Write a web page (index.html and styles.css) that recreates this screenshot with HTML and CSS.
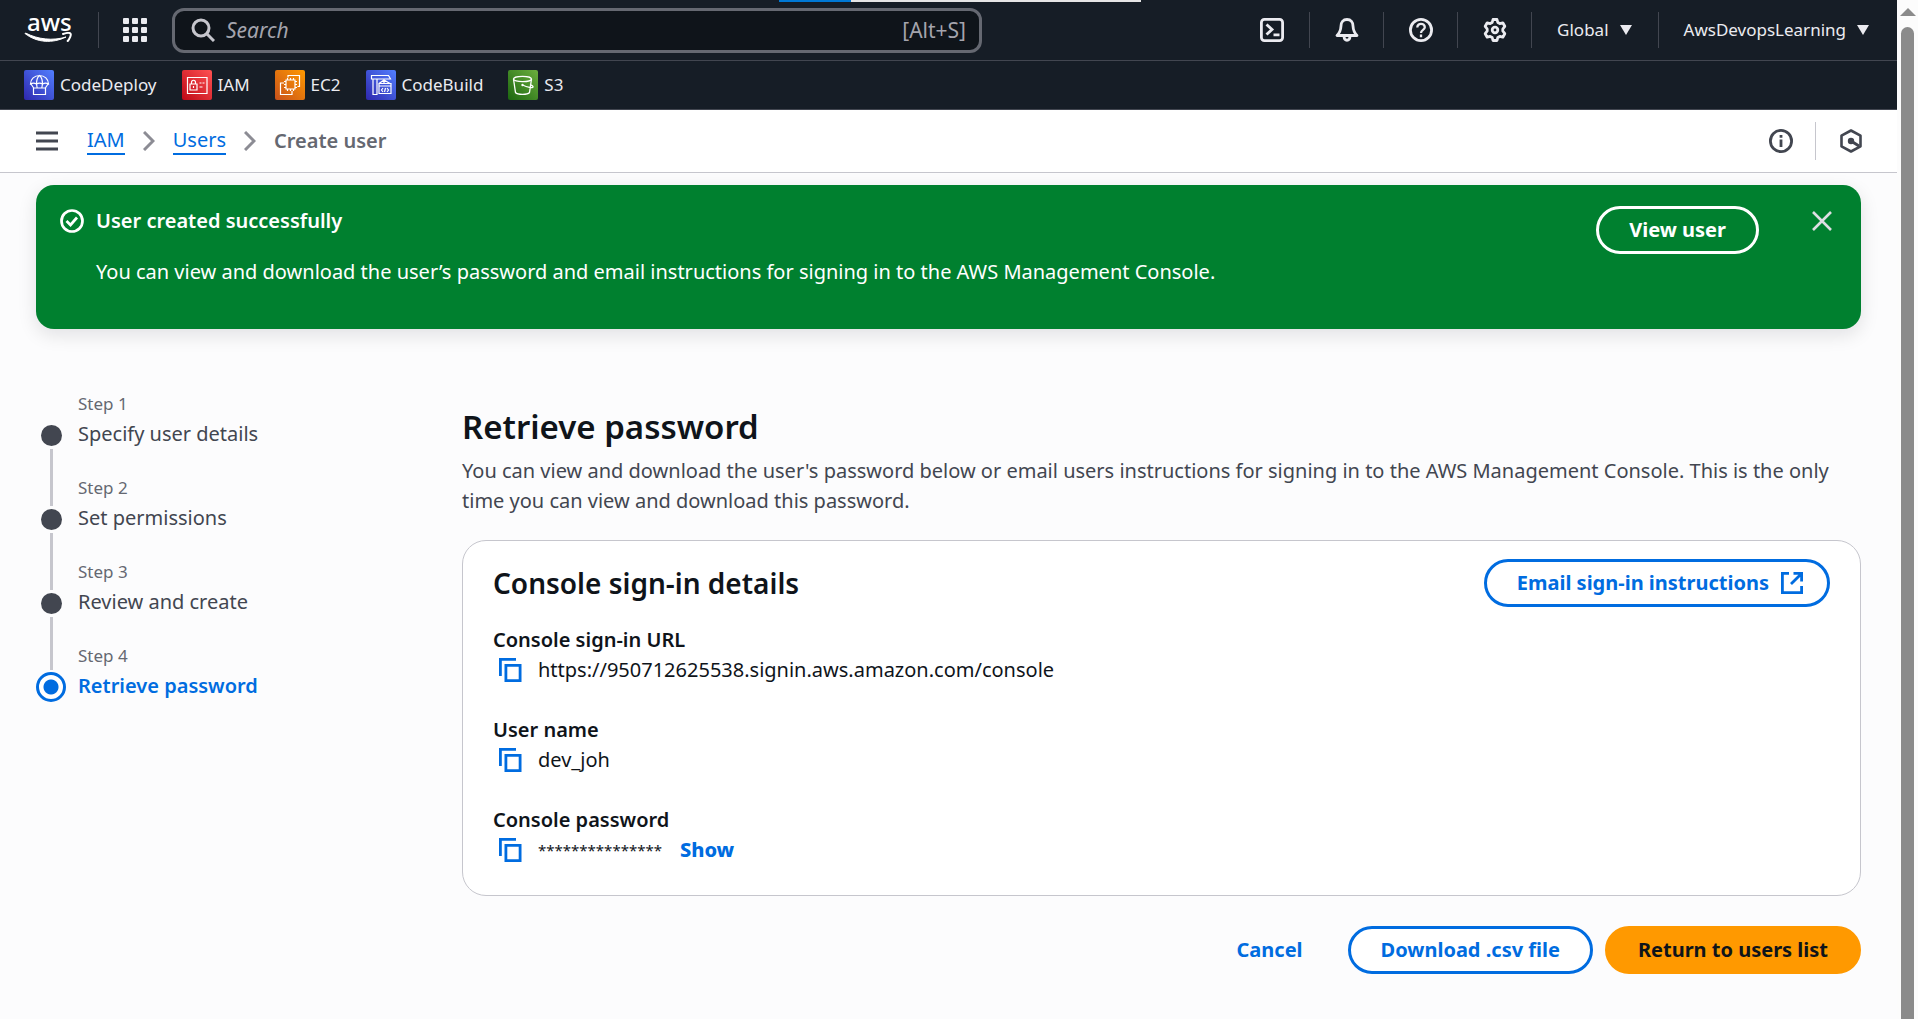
FILE: index.html
```html
<!DOCTYPE html>
<html lang="en">
<head>
<meta charset="utf-8">
<title>Create user | IAM</title>
<link rel="stylesheet" href="styles.css">
</head>
<body>
<div class="page">
  <header class="topnav">
    <a class="logo" href="#" aria-label="AWS home">
      <span class="logo-text">aws</span>
      <svg class="logo-smile" viewBox="0 0 48 13" aria-hidden="true"><path d="M1 1.500C13 11 29 11.500 42 5C29 9 14 7.500 1.500 1z" fill="#fff" stroke="#fff" stroke-linejoin="round"/><path d="M39 2c3-1 6.500-1.500 7.500-.4s-.8 5-2.800 7.400" fill="none" stroke="#fff" stroke-width="2" stroke-linecap="round"/></svg>
    </a>
    <button class="icon-btn apps" aria-label="Services"><svg viewBox="0 0 24 24" fill="#ebebf0"><rect width="6" height="6" rx="1"/><rect x="9" width="6" height="6" rx="1"/><rect x="18" width="6" height="6" rx="1"/><rect y="9" width="6" height="6" rx="1"/><rect x="9" y="9" width="6" height="6" rx="1"/><rect x="18" y="9" width="6" height="6" rx="1"/><rect y="18" width="6" height="6" rx="1"/><rect x="9" y="18" width="6" height="6" rx="1"/><rect x="18" y="18" width="6" height="6" rx="1"/></svg></button>
    <label class="search">
      <svg viewBox="0 0 24 24" fill="none" stroke="#c6c6cd" stroke-width="3"><circle cx="10" cy="10" r="8"/><path d="M16 16l7 7"/></svg>
      <input type="search" placeholder="Search" aria-label="Search">
      <span class="hint">[Alt+S]</span>
    </label>
    <nav class="utils" aria-label="Utilities">
      <button class="icon-btn" aria-label="CloudShell"><svg viewBox="0 0 24 24" fill="none" stroke="#ebebf0" stroke-width="2.800"><rect x="1.400" y="1.400" width="21.200" height="21.200" rx="3"/><path d="M6.500 6.500l5.500 5-5.500 5M13.500 16.800h6"/></svg></button>
      <button class="icon-btn" aria-label="Notifications"><svg viewBox="0 0 24 24" fill="none" stroke="#ebebf0" stroke-width="2.800" stroke-linejoin="round"><path d="M12 1.500c-4 0-6 3-6 6.500-.2 4-1.500 7-4 9.500h20c-2.500-2.500-3.800-5.500-4-9.500 0-3.500-2-6.500-6-6.500z"/><path d="M9 18.500c.3 5 5.700 5 6 0"/></svg></button>
      <button class="icon-btn" aria-label="Help"><svg viewBox="0 0 24 24" fill="none" stroke="#ebebf0" stroke-width="2.800"><circle cx="12" cy="12" r="10.600"/><path d="M8.300 9.500c0-5 7.500-4.500 7.500-.3 0 2.800-3.800 2.500-3.800 5.800M12 16.500v2.700" stroke-width="2.300"/></svg></button>
      <button class="icon-btn" aria-label="Settings"><svg viewBox="0 0 24 24" fill="none" stroke="#ebebf0" stroke-width="2.800" stroke-linejoin="round"><path d="M10 1.500h4l.8 3 2 1.100 3-.8 2 3.500-2 2.700v2l2 2.700-2 3.500-3-.8-2 1.100-.8 3h-4l-.8-3-2-1.100-3 .8-2-3.500 2-2.700v-2l-2-2.700 2-3.500 3 .8 2-1.100z"/><circle cx="12" cy="12" r="2.800"/></svg></button>
      <button class="menu-btn">Global <span class="caret"></span></button>
      <button class="menu-btn">AwsDevopsLearning <span class="caret"></span></button>
    </nav>
    <div class="loader"></div>
  </header>

  <nav class="favorites" aria-label="Favorites">
    <a href="#"><svg class="tile" viewBox="0 0 30 30"><defs><linearGradient id="blue" x1="0" y1="1" x2="1" y2="0"><stop stop-color="#2e27ad"/><stop offset="1" stop-color="#527fff"/></linearGradient><linearGradient id="red" x1="0" y1="1" x2="1" y2="0"><stop stop-color="#bd0816"/><stop offset="1" stop-color="#ff5252"/></linearGradient><linearGradient id="orange" x1="0" y1="1" x2="1" y2="0"><stop stop-color="#c8511b"/><stop offset="1" stop-color="#f90"/></linearGradient><linearGradient id="green" x1="0" y1="1" x2="1" y2="0"><stop stop-color="#1b660f"/><stop offset="1" stop-color="#6cae3e"/></linearGradient></defs><rect width="30" height="30" rx="2" fill="url(#blue)"/><path d="M6.500 14c0-5 4-8.500 9-8.500s9 3.500 9 8.500c-2-1.300-4-1.300-6 0-2-1.300-4-1.300-6 0-2-1.300-4-1.300-6 0zM12.500 14c0-4 1-7 3-8.500 2 1.500 3 4.500 3 8.500M7 14l3 4.500M24 14l-3 4.500M12.500 14l.7 4M18.500 14l-.7 4M9.500 18h12v6.500h-12z" fill="none" stroke="#fff" stroke-width="1.200"/></svg>CodeDeploy</a>
    <a href="#"><svg class="tile" viewBox="0 0 30 30"><rect width="30" height="30" rx="2" fill="url(#red)"/><path d="M5.500 7.500h19.500v16H5.500zM8 14h7v6H8zM9.500 14v-1.500c0-3 4-3 4 0V14M11.500 16v2M17.500 13h2M20.500 13h2M17.500 17h3" fill="none" stroke="#fff" stroke-width="1.200"/></svg>IAM</a>
    <a href="#"><svg class="tile" viewBox="0 0 30 30"><rect width="30" height="30" rx="2" fill="url(#orange)"/><path d="M11 10h9v9h-9zM12.500 10V8M15.500 10V8M18.500 10V8M12.500 19v2M15.500 19v2M18.500 19v2M11 11.500H9M11 14.500H9M11 17.500H9M20 11.500h2M20 14.500h2M20 17.500h2M13 7.500v-2h11.500v11h-2M9 13H5.500v11.500H17V21" fill="none" stroke="#fff" stroke-width="1.200"/></svg>EC2</a>
    <a href="#"><svg class="tile" viewBox="0 0 30 30"><rect width="30" height="30" rx="2" fill="url(#blue)"/><path d="M5.500 5.500h17l2 3.500h-19zM7 9v15.500h4V9M18 9v4M13 13.500h12v10H13zM13 16h12M17 18l-1.500 2 1.500 2M21 18l1.500 2-1.500 2M19.500 18l-1 4M13 13.500l5-3.500 6 3.500" fill="none" stroke="#fff" stroke-width="1.200"/></svg>CodeBuild</a>
    <a href="#"><svg class="tile" viewBox="0 0 30 30"><rect width="30" height="30" rx="2" fill="url(#green)"/><g fill="none" stroke="#fff" stroke-width="1.300"><ellipse cx="14.500" cy="9" rx="9" ry="2.700"/><path d="M5.500 9l2 13.500c2 2.500 12 2.500 14 0l2-13.500M14.500 15c4 1.800 11 4 10.500 1.500-.3-1-2-1.500-3-2"/></g><circle cx="14.500" cy="15" r="1.200" fill="#fff"/></svg>S3</a>
  </nav>

  <div class="crumb-bar">
    <button class="icon-btn burger" aria-label="Open navigation"><svg viewBox="0 0 22 20" fill="none" stroke="#424650" stroke-width="3"><path d="M0 2h22M0 10h22M0 18h22"/></svg></button>
    <nav class="crumbs" aria-label="Breadcrumbs">
      <a href="#">IAM</a>
      <svg viewBox="0 0 12 20" fill="none" stroke="#8c8c94" stroke-width="3"><path d="M1 1l9 9-9 9"/></svg>
      <a href="#">Users</a>
      <svg viewBox="0 0 12 20" fill="none" stroke="#8c8c94" stroke-width="3"><path d="M1 1l9 9-9 9"/></svg>
      <span>Create user</span>
    </nav>
    <div class="panels">
      <button class="icon-btn" aria-label="Info"><svg viewBox="0 0 24 24" fill="none" stroke="#424650" stroke-width="2.800"><circle cx="12" cy="12" r="10.600"/><path d="M12 10.500v7.500M12 6v2.800"/></svg></button>
      <button class="icon-btn" aria-label="Amazon Q"><svg viewBox="0 0 24 24" fill="none" stroke="#424650" stroke-width="2.600" stroke-linejoin="round"><path d="M12 1.500l9.500 5.200v10.600L12 22.500l-9.500-5.200V6.700z"/><path d="M12 12l8 5" stroke-width="3"/><circle cx="12" cy="12" r="3.200" fill="#424650" stroke="none"/></svg></button>
    </div>
  </div>

  <main class="content">
    <section class="flash">
      <svg class="flash-icon" viewBox="0 0 24 24" fill="none" stroke="#fff" stroke-width="2.700"><circle cx="12" cy="12" r="10.500"/><path d="M6.500 12l4 4L17 8.500"/></svg>
      <div class="flash-text">
        <h2>User created successfully</h2>
        <p>You can view and download the user’s password and email instructions for signing in to the AWS Management Console.</p>
      </div>
      <button class="btn btn-flash">View user</button>
      <button class="icon-btn close" aria-label="Dismiss"><svg viewBox="0 0 20 20" fill="none" stroke="#dedee3" stroke-width="2.600"><path d="M1 1l18 18M19 1L1 19"/></svg></button>
    </section>

    <div class="wizard">
      <ol class="steps">
        <li><span class="marker"></span><small>Step 1</small><a href="#">Specify user details</a></li>
        <li><span class="marker"></span><small>Step 2</small><a href="#">Set permissions</a></li>
        <li><span class="marker"></span><small>Step 3</small><a href="#">Review and create</a></li>
        <li class="current" aria-current="step"><span class="marker"></span><small>Step 4</small><a href="#">Retrieve password</a></li>
      </ol>

      <div class="panel">
        <h1>Retrieve password</h1>
        <p class="lead">You can view and download the user's password below or email users instructions for signing in to the AWS Management Console. This is the only time you can view and download this password.</p>

        <section class="card">
          <div class="card-head">
            <h2>Console sign-in details</h2>
            <button class="btn">Email sign-in instructions <svg viewBox="0 0 22 22" fill="none" stroke="currentColor" stroke-width="2.800"><path d="M8 1.400H1.400v19.200h19.200V14M12.500 1.400h8.100v8.100M20.600 1.400L10 12"/></svg></button>
          </div>
          <dl>
            <div><dt>Console sign-in URL</dt>
              <dd><button class="icon-btn copy" aria-label="Copy URL"><svg viewBox="0 0 24 24" fill="none" stroke="#006ce0" stroke-width="2.800"><path d="M17 1.400H1.400V18M6.900 7.400h14.200v15.200H6.900z"/></svg></button><span>https://950712625538.signin.aws.amazon.com/console</span></dd></div>
            <div><dt>User name</dt>
              <dd><button class="icon-btn copy" aria-label="Copy user name"><svg viewBox="0 0 24 24" fill="none" stroke="#006ce0" stroke-width="2.800"><path d="M17 1.400H1.400V18M6.900 7.400h14.200v15.200H6.900z"/></svg></button><span>dev_joh</span></dd></div>
            <div><dt>Console password</dt>
              <dd><button class="icon-btn copy" aria-label="Copy password"><svg viewBox="0 0 24 24" fill="none" stroke="#006ce0" stroke-width="2.800"><path d="M17 1.400H1.400V18M6.900 7.400h14.200v15.200H6.900z"/></svg></button><span class="masked">***************</span><button class="show">Show</button></dd></div>
          </dl>
        </section>

        <div class="actions">
          <button class="btn btn-link">Cancel</button>
          <button class="btn">Download .csv file</button>
          <button class="btn btn-primary">Return to users list</button>
        </div>
      </div>
    </div>
  </main>
</div>
<div class="scrollbar" aria-hidden="true"><span class="scroll-arrow"></span><span class="scroll-thumb"></span></div>
</body>
</html>
```
FILE: styles.css
```css
* { box-sizing: border-box; }

body {
  margin: 0;
  min-height: 100vh;
  display: flex;
  background: #fcfcfd;
  color: #0f141a;
  font: 20px/30px "Noto Sans", "Open Sans", sans-serif;
}

button, input { font: inherit; color: inherit; }
button { border: 0; background: none; padding: 0; }
h1, h2, p, dl, dd, ol { margin: 0; padding: 0; }
svg { display: block; flex: none; }

.page { flex: 1; min-width: 0; }

/* top navigation */
.topnav {
  position: relative;
  display: flex;
  align-items: center;
  height: 61px;
  padding: 0 24px;
  background: #161d26;
  border-bottom: 1px solid #424650;
  color: #ebebf0;
  font-size: 17px;
}
.logo {
  width: 75px;
  height: 36px;
  border-right: 1px solid #424650;
  color: #fff;
  text-decoration: none;
}
.logo-text { display: block; padding-left: 3px; font: 500 24px/20px "Noto Sans", sans-serif; }
.logo-smile { width: 48px; height: 13px; }
.icon-btn { display: flex; align-items: center; justify-content: center; }
.icon-btn svg { width: 24px; height: 24px; }
.apps { margin: 0 25px 0 24px; }

.search {
  display: flex;
  align-items: center;
  flex: 0 1 810px;
  height: 45px;
  padding: 0 13px 0 16px;
  border: 3px solid #656871;
  border-radius: 12px;
  background: #0f141a;
  color: #a4a4ad;
  font-size: 21px;
}
.search svg { width: 24px; height: 24px; }
.search input { flex: 1; min-width: 0; margin: 0 11px; padding: 0; border: 0; outline: 0; background: none; }
.search input::placeholder { color: #a4a4ad; font-style: italic; opacity: 1; }

.utils { display: flex; margin-left: auto; }
.utils > * { height: 36px; border-left: 1px solid #424650; }
.utils > :first-child { border-left: 0; }
.utils .icon-btn { width: 74px; }
.menu-btn { display: flex; align-items: center; gap: 11px; padding: 0 26px 0 25px; }
.menu-btn:last-child { padding-right: 4px; }
.caret { border: 6px solid transparent; border-top: 10px solid #ebebf0; border-bottom: 0; }
.loader {
  position: absolute;
  top: 0;
  left: 779px;
  width: 362px;
  height: 2px;
  background: linear-gradient(90deg, #0078d4 72px, #e5e5e5 72px);
}

/* favorites */
.favorites {
  display: flex;
  gap: 25px;
  align-items: center;
  height: 49px;
  padding: 0 24px;
  background: #161d26;
  border-bottom: 1px solid #424650;
  font-size: 17px;
}
.favorites a { display: flex; align-items: center; gap: 6px; color: #ebebf0; text-decoration: none; }
.tile { width: 30px; height: 30px; }

/* breadcrumbs */
.crumb-bar {
  display: flex;
  align-items: center;
  height: 63px;
  padding: 0 12px 0 36px;
  background: #fff;
  border-bottom: 1px solid #c6c6cd;
}
.burger svg { width: 22px; height: 20px; }
.crumbs { display: flex; align-items: center; gap: 18px; margin-left: 29px; }
.crumbs a { color: #006ce0; text-decoration: none; line-height: 26px; border-bottom: 2px solid #006ce0; }
.crumbs svg { width: 12px; height: 20px; }
.crumbs span { color: #656871; font-weight: 600; }
.panels { display: flex; margin-left: auto; }
.panels .icon-btn { width: 69px; height: 38px; }
.panels .icon-btn + .icon-btn { width: 70px; border-left: 1px solid #c6c6cd; }

.content { padding: 12px 36px 45px; }

/* success message */
.flash {
  display: flex;
  align-items: flex-start;
  min-height: 144px;
  padding: 21px 29px 24px 24px;
  border-radius: 18px;
  background: #00802f;
  color: #fff;
  box-shadow: 0 6px 18px 1px #0007161a;
}
.flash-icon { width: 24px; height: 24px; margin: 3px 12px 0 0; }
.flash-text { flex: 1; display: grid; gap: 21px; }
.flash h2 { font-size: 20px; line-height: 30px; font-weight: 600; }
.close { margin: 5px 0 0 53px; }
.close svg { width: 20px; height: 20px; }

.btn {
  display: inline-flex;
  align-items: center;
  gap: 12px;
  height: 48px;
  padding: 0 30px;
  border: 3px solid #006ce0;
  border-radius: 30px;
  background: #fff;
  color: #006ce0;
  font-weight: 700;
  white-space: nowrap;
}
.btn svg { width: 22px; height: 22px; }
.card-head .btn { padding-right: 24px; }
.btn-flash { border-color: #fff; background: none; color: #fff; }
.btn-link { border-color: transparent; background: none; }
.btn-primary { border-color: #f90; background: #f90; color: #0f141a; }

/* wizard */
.wizard { display: grid; grid-template-columns: 396px 1fr; gap: 30px; padding-top: 60px; }
.steps { list-style: none; }
.steps li {
  display: grid;
  grid-template-columns: 30px 1fr;
  grid-template-rows: 30px 30px;
  column-gap: 12px;
  height: 84px;
}
.steps small { grid-column: 2; grid-row: 1; color: #656871; font-size: 17px; }
.steps a { grid-column: 2; grid-row: 2; color: #424650; text-decoration: none; }
.marker {
  grid-column: 1;
  grid-row: 2;
  justify-self: center;
  align-self: center;
  width: 21px;
  height: 21px;
  margin-top: 2px;
  border-radius: 50%;
  background: #424650;
}
.steps li:not(.current)::after {
  content: "";
  grid-column: 1;
  grid-row: 3;
  justify-self: center;
  width: 3px;
  height: 57px;
  background: #c6c6cd;
}
.steps li:nth-child(3)::after { height: 53px; }
.current .marker { width: 30px; height: 30px; border: 3px solid #006ce0; background: radial-gradient(circle, #006ce0 7px, #fff 8px); }
.steps .current a { color: #006ce0; font-weight: 600; }

.panel { padding-top: 17px; }
h1 { font-size: 33px; line-height: 42px; font-weight: 600; }
.lead { margin-top: 8px; color: #424650; }
.card { margin-top: 24px; padding: 18px 30px 30px; border: 1px solid #c6c6cd; border-radius: 24px; background: #fff; }
.card-head { display: flex; justify-content: space-between; align-items: center; }
.card h2 { font-size: 28px; line-height: 36px; font-weight: 600; }
dl { display: grid; gap: 30px; margin-top: 18px; }
dt { font-weight: 600; }
dd { display: flex; align-items: center; }
.copy { margin: 0 15px 0 6px; }
.masked { font-size: 15px; }
.show { margin-left: 18px; color: #006ce0; font-weight: 800; }
.actions { display: flex; justify-content: flex-end; gap: 12px; margin-top: 30px; }

/* scrollbar */
.scrollbar { display: flex; flex-direction: column; align-items: center; gap: 11px; width: 21px; padding-top: 8px; background: #fcfcfc; }
.scroll-arrow { border: 8px solid transparent; border-top: 0; border-bottom: 8px solid #8b8b8b; }
.scroll-thumb { flex: 1; width: 13px; border-radius: 7px 7px 0 0; background: #8b8b8b; }
```
